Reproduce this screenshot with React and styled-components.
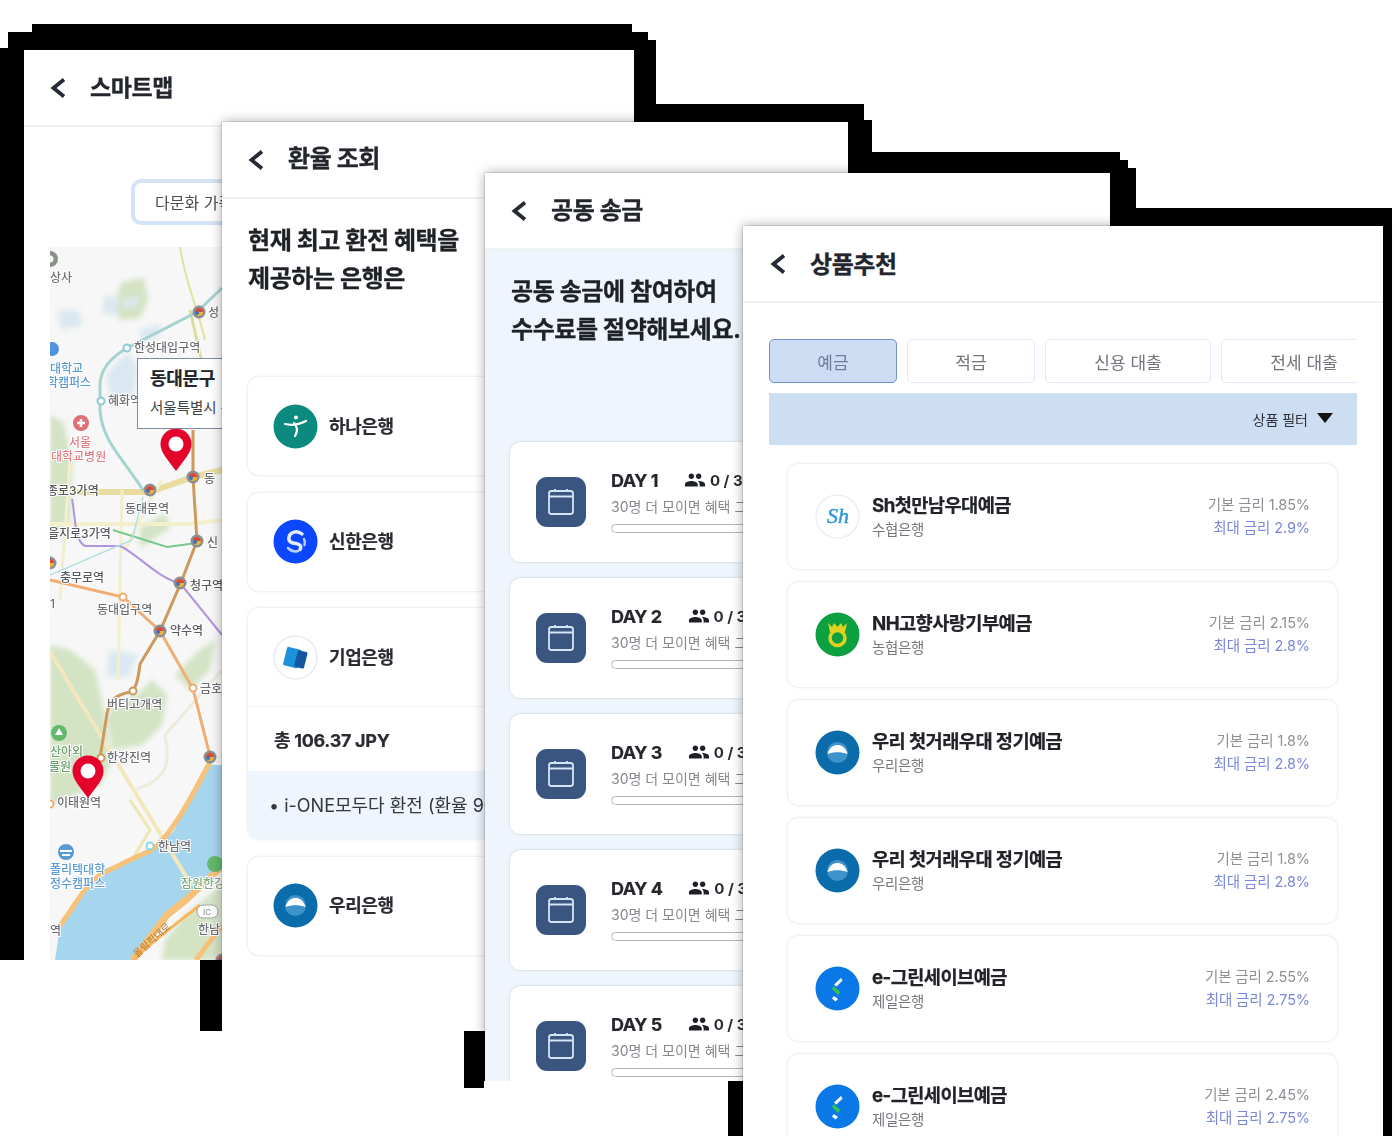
import React from 'react'
import styled, { createGlobalStyle } from 'styled-components'
import { MdPeople } from 'react-icons/md'

const GlobalStyle = createGlobalStyle`
  html, body {
    margin: 0;
    padding: 0;
    background: #ffffff;
  }
  * {
    box-sizing: border-box;
  }
`;

const Canvas = styled.div`
  position: relative;
  width: 1397px;
  height: 1138px;
  overflow: hidden;
  background: #ffffff;
  font-family: Inter, "Noto Sans CJK KR", sans-serif;
  color: #1d1f24;
`;

// the stepped black matte that shows round the overlapping screens
const Matte = styled.div`
  position: absolute;
  inset: 0;
  background: #000000;
  clip-path: polygon(
    0 48px, 8px 48px, 8px 32px, 32px 32px, 32px 24px, 632px 24px, 632px 32px, 648px 32px,
    648px 40px, 656px 40px, 656px 104px, 864px 104px, 864px 120px, 872px 120px, 872px 152px,
    1120px 152px, 1120px 160px, 1128px 160px, 1128px 168px, 1136px 168px, 1136px 208px,
    1392px 208px, 1392px 1136px, 728px 1136px, 728px 1081px, 484px 1081px, 484px 1088px,
    464px 1088px, 464px 1031px, 200px 1031px, 200px 960px, 0 960px
  );
`;

const Screen = styled.section`
  position: absolute;
  left: ${props => props.$x}px;
  top: ${props => props.$y}px;
  width: ${props => props.$w}px;
  height: ${props => props.$h}px;
  background: ${props => props.$tint ? "#eff5fd" : "#ffffff"};
  box-shadow: 0 0 1px rgba(0, 0, 0, 0.55), 0 0 11px rgba(0, 0, 0, 0.34);
  clip-path: inset(-24px -24px 0 -24px);
  overflow: hidden;
`;

const Soft = styled.div`
  filter: blur(0.6px);
`;

const Header = styled.header`
  height: 77px;
  background: #ffffff;
  border-bottom: 2px solid #f0f1f3;
  display: flex;
  align-items: center;
  gap: 24px;
  padding-left: ${props => props.$pad || 26}px;
`;

const Title = styled.h1`
  margin: ${props => props.$lift || -3}px 0 0;
  font-size: ${props => props.$size || 24}px;
  font-weight: 700;
  letter-spacing: -0.4px;
  -webkit-text-stroke: 0.3px #23262c;
  color: #23262c;
`;

const Heading = styled.h2`
  margin: 0;
  font-size: 24px;
  line-height: 38px;
  font-weight: 700;
  letter-spacing: -0.4px;
  -webkit-text-stroke: 0.3px #1e2126;
  color: #1e2126;
`;

/* smart map */
const MapBody = styled.div`
  padding: 52px 0 0 26px;
`;

const ChipRow = styled.div`
  padding-left: 81px;
  margin-bottom: 22px;
`;

const Chip = styled.div`
  width: 300px;
  height: 46px;
  border: 4px solid #d4e3f6;
  border-radius: 10px;
  padding-left: 20px;
  display: flex;
  align-items: center;
  font-size: 16px;
  color: #4a4d52;
`;

const MapBox = styled.div`
  position: relative;
  width: 560px;
  height: 713px;
  overflow: hidden;
`;

const MapPopup = styled.div`
  position: absolute;
  left: 87px;
  top: 111px;
  width: 190px;
  height: 71px;
  background: #ffffff;
  border: 1px solid #7d8aa3;
  padding: 7px 0 0 12px;
`;

const PopupName = styled.div`
  font-size: 18px;
  line-height: 26px;
  font-weight: 700;
  letter-spacing: -0.3px;
  -webkit-text-stroke: 0.2px #24262b;
  color: #24262b;
`;

const PopupSub = styled.div`
  margin-top: 6px;
  font-size: 14.5px;
  line-height: 20px;
  color: #3d3f44;
`;

/* exchange rate */
const RateBody = styled.div`
  padding: 23px 0 0 26px;
`;

const BankList = styled.div`
  margin-top: 79px;
  display: flex;
  flex-direction: column;
  gap: 17.5px;
`;

const Card = styled.div`
  background: #ffffff;
  border-radius: 10px;
  box-shadow: 0 0 3px rgba(0, 0, 0, 0.16);
  overflow: hidden;
`;

const BankCard = styled(Card)`
  width: 555px;
`;

const BankRow = styled.div`
  height: 98px;
  display: flex;
  align-items: center;
  gap: 11px;
  padding-left: 25px;
`;

const BankName = styled.div`
  margin-top: -3px;
  font-size: 18px;
  font-weight: 700;
  letter-spacing: -0.4px;
  -webkit-text-stroke: 0.2px #2a2c31;
  color: #2a2c31;
`;

const BankTotal = styled.div`
  height: 65px;
  border-top: 1px solid #f0f1f3;
  display: flex;
  align-items: center;
  padding-left: 26px;
  font-size: 18px;
  font-weight: 700;
  letter-spacing: -0.3px;
  -webkit-text-stroke: 0.2px #2a2c31;
  color: #2a2c31;
`;

const BankOffer = styled.div`
  height: 68px;
  background: #eef5fd;
  display: flex;
  align-items: center;
  padding: 0 0 2px 21px;
  font-size: 18px;
  color: #34373c;
  white-space: nowrap;
`;

/* group transfer */
const GroupBody = styled.div`
  padding: 23px 0 0 26px;
`;

const DayList = styled.div`
  margin-top: 93px;
  display: flex;
  flex-direction: column;
  gap: 16px;
`;

const DayCard = styled(Card)`
  width: 560px;
  height: 120px;
  flex: none;
  margin-left: -1px;
  display: flex;
  align-items: flex-start;
  padding: 35px 0 0 26px;
  gap: 25px;
`;

const DayIcon = styled.div`
  width: 50px;
  height: 50px;
  flex: none;
  background: #3a5680;
  border-radius: 11px;
  display: flex;
  align-items: center;
  justify-content: center;
`;

const DayInfo = styled.div`
  flex: 1;
  margin-top: -10px;
`;

const DayTop = styled.div`
  display: flex;
  align-items: center;
  gap: 26px;
  height: 26px;
`;

const DayName = styled.div`
  font-size: 18px;
  font-weight: 700;
  letter-spacing: -0.5px;
  -webkit-text-stroke: 0.2px #24262b;
  color: #24262b;
`;

const DayCount = styled.div`
  display: flex;
  align-items: center;
  gap: 4px;
  font-size: 15px;
  font-weight: 700;
  color: #2a2c31;
`;

const DayNote = styled.div`
  margin-top: 4px;
  font-size: 14px;
  line-height: 20px;
  color: #85888d;
  white-space: nowrap;
`;

const Progress = styled.div`
  margin-top: 7px;
  width: 400px;
  height: 9px;
  border: 1.5px solid #b5b7ba;
  border-radius: 5px;
  background: #ffffff;
`;

/* product recommendation */
const ProductBody = styled.div`
  padding: 36px 26px 0 26px;
`;

const Tabs = styled.div`
  display: flex;
  gap: 10px;
  overflow: hidden;
  height: 44px;
`;

const Tab = styled.div`
  flex: none;
  width: ${props => props.$w}px;
  height: 44px;
  border-radius: 5px;
  border: ${props => props.$active ? "1.5px solid #6f8fce" : "1.5px solid #e0e9f5"};
  background: ${props => props.$active ? "#cbdcf3" : "#ffffff"};
  color: ${props => props.$active ? "#6d7f97" : "#72767c"};
  display: flex;
  align-items: center;
  justify-content: center;
  font-size: 17px;
`;

const FilterBar = styled.div`
  margin-top: 10px;
  height: 52px;
  background: #cddef3;
  display: flex;
  align-items: center;
  justify-content: flex-end;
  gap: 9px;
  padding-right: 24px;
  font-size: 14px;
  color: #2d3036;
`;

const Arrow = styled.span`
  width: 0;
  height: 0;
  border-left: 8px solid transparent;
  border-right: 8px solid transparent;
  border-top: 10px solid #111111;
  margin-bottom: 2px;
`;

const ProductList = styled.div`
  margin: 19px 20px 0 19px;
  display: flex;
  flex-direction: column;
  gap: 13px;
`;

const ProductCard = styled(Card)`
  height: 105px;
  flex: none;
  display: flex;
  align-items: center;
  padding: 0 27px 0 27px;
  gap: 12px;
`;

const ProductText = styled.div`
  flex: 1;
`;

const ProductName = styled.div`
  font-size: 18.7px;
  line-height: 26px;
  font-weight: 700;
  letter-spacing: -0.6px;
  -webkit-text-stroke: 0.25px #212328;
  color: #212328;
`;

const ProductBank = styled.div`
  font-size: 14.5px;
  line-height: 22px;
  letter-spacing: -0.3px;
  color: #75787d;
`;

const Rates = styled.div`
  margin-top: -2px;
  text-align: right;
  font-size: 14.5px;
  line-height: 23px;
  letter-spacing: -0.1px;
`;

const BaseRate = styled.div`
  color: #8d9095;
`;

const MaxRate = styled.div`
  color: #7a88d6;
`;

const MapText = styled.text`
  font-family: Inter, "Noto Sans CJK KR", sans-serif;
  font-size: 12px;
  font-weight: 500;
  paint-order: stroke;
  stroke: #ffffff;
  stroke-width: 2px;
  fill: ${props => props.$fill || "#6c6f74"};
`;

const Washes = styled.g`
  filter: blur(2.5px);
`;

const BANK_LOGOS = {
  hana: (
    <>
      <circle cx="22.5" cy="22.5" r="22" fill="#0c8a7f" />
      <circle cx="23" cy="13.5" r="2" fill="#ffffff" />
      <path d="M12 20c6 1.500 14 .5 21-3" stroke="#ffffff" strokeWidth="2.200" fill="none" strokeLinecap="round" />
      <path d="M21 19c4 4 4 8 1 13" stroke="#ffffff" strokeWidth="2.200" fill="none" strokeLinecap="round" />
    </>
  ),
  shinhan: (
    <>
      <circle cx="22.500" cy="22.500" r="22" fill="#0a47ff" />
      <path d="M29 15c-5-4-12-2-13 3s3 6 7 6.500 6 3 4 6" stroke="#e4ecff" strokeWidth="3.500" fill="none" strokeLinecap="round" />
      <path d="M15 29c3 3 7 4 10 3M31 20c1 2 1 4 .5 6" stroke="#b9ccff" strokeWidth="2.500" fill="none" strokeLinecap="round" />
    </>
  ),
  ibk: (
    <>
      <circle cx="22.500" cy="22.500" r="21.500" fill="#ffffff" stroke="#ebe9f3" strokeWidth="1.500" />
      <rect x="12" y="13" width="15" height="19" rx="1.500" fill="#1c92dc" transform="rotate(14 19 22)" />
      <rect x="23" y="16" width="10" height="17" rx="1.500" fill="#14579f" transform="rotate(14 28 24)" />
    </>
  ),
  woori: (
    <>
      <circle cx="22.500" cy="22.500" r="22" fill="#0a6cab" />
      <circle cx="22.500" cy="22.500" r="10.500" fill="#3f93cb" />
      <path d="M12.500 24c2-7 6-9 10-9s8 2 10 9c-6-2.500-14-2.500-20 0z" fill="#ffffff" />
    </>
  ),
  sh: (
    <>
      <circle cx="22.500" cy="22.500" r="21.500" fill="#ffffff" stroke="#e9eef5" strokeWidth="1.500" />
      <text x="23" y="29" textAnchor="middle" fontFamily="Liberation Serif, serif" fontStyle="italic" fontWeight="400" fontSize="22" fill="#2f9bd9" stroke="#2f9bd9" strokeWidth="0.500">Sh</text>
    </>
  ),
  nh: (
    <>
      <circle cx="22.500" cy="22.500" r="22" fill="#0ca040" />
      <path d="M13 11l4 4 2-4 3.500 4 3.500-4 2 4 4-4-2 9h-15z" fill="#e2d21e" />
      <circle cx="22.500" cy="26" r="7.500" fill="none" stroke="#e2d21e" strokeWidth="3.500" />
    </>
  ),
  sc: (
    <>
      <circle cx="22.500" cy="22.500" r="22" fill="#0b78e8" />
      <path d="M26 12l-7 6.500 2.500 2 6-6z" fill="#ffffff" />
      <path d="M18.500 20l7 6-2.500 3-6-6z" fill="#35c24e" />
      <path d="M19 30l4 3-2.500 2.500-3.500-3z" fill="#ffffff" />
    </>
  ),
};

const BankLogo = ({ kind }) => (
  <svg width="45" height="45" viewBox="0 0 45 45" style={{ flex: 'none' }}>
    {BANK_LOGOS[kind]}
  </svg>
);

const BackIcon = () => (
  <svg width="16" height="22" viewBox="0 0 16 22" style={{ flex: 'none' }}>
    <polyline points="14,2.500 3.500,11 14,19.500" fill="none" stroke="#252a35" strokeWidth="3.800" />
  </svg>
);

const CalendarIcon = () => (
  <svg width="28" height="28" viewBox="0 0 28 28">
    <rect x="2" y="3" width="24" height="23" rx="2.500" fill="none" stroke="#d6e4f6" strokeWidth="1.800" />
    <path d="M2 8.500h24M8 1v3M20 1v3" stroke="#d6e4f6" strokeWidth="1.800" fill="none" />
  </svg>
);

const Pin = ({ x, y }) => (
  <g transform={`translate(${x} ${y})`}>
    <path d="M0 21C-9 9-15.500 2-15.500-6a15.500 15.500 0 0 1 31 0C15.500 2 9 9 0 21z" fill="#e3032b" />
    <circle cx="0" cy="-6" r="7.500" fill="#ffffff" />
  </g>
);

const GREEN_AREAS = [
  "M50 415l14 8 8 40 -2 60 -20 10z",
  "M50 645l20 5 25 20 10 45 5 50-10 20-50 20z",
  "M112 705l25-10 15-15 15 15-5 30-20 20-30 5-5-30z",
  "M122 282l22-4 4 22-8 18-20 2-6-18z",
  "M175 675l25-25 15-10-5 30-20 20z",
  "M140 528l25-15 5 15-30 20z",
  "M195 810l27-20v40l-20 20z",
  "M165 940l20-25 37-30v75h-60z",
];

const WATER_AREAS = [
  "M105 295l15 3-4 18-14-4z",
  "M58 310h20l5 15-22 5z",
  "M128 352l-22 22 6 30 22-10 4-25z",
  "M110 650l28 5-10 22-22 0z",
  "M140 330l20-6 0 12-18 6z",
  "M122 300l18-4 -4 10-12 2z",
];

const ROADS = [
  { d: "M50 652L187 878", color: "#f3e8bd", width: 4 },
  { d: "M50 492H150L193 477L222 470", color: "#e8dd9e", width: 6 },
  { d: "M50 524H190L222 520", color: "#f3eecc", width: 4 },
  { d: "M70 460L60 600M122 490L118 680", color: "#f3eecc", width: 3 },
  { d: "M190 310L215 420", color: "#dcdf9b", width: 3 },
  { d: "M180 247C185 280 195 300 205 340", color: "#dde3a0", width: 2 },
  { d: "M125 550L150 500L162 480", color: "#f3eecc", width: 3 },
  { d: "M133 790C170 780 170 760 165 735L222 670", color: "#eeeadc", width: 3 },
  { d: "M133 858L150 830L130 800", color: "#efe6b4", width: 3 },
  { d: "M60 926C75 905 85 885 100 875C125 862 140 855 150 851C170 838 190 800 210 762", color: "#f6c27a", width: 5 },
  { d: "M133 960L167 915L187 899L222 866", color: "#f6c27a", width: 7 },
  { d: "M196 960L222 925", color: "#f6c27a", width: 5 },
  { d: "M133 960C160 935 175 925 200 905", color: "#f9b45d", width: 3 },
];

const LINES = [
  { d: "M222 288L197 312L127 348C110 358 100 370 100 385V410C102 440 120 455 143 490", color: "#a5d3d0", width: 3 },
  { d: "M193 430L193 477L197 541L180 585L160 631L140 664C138 680 136 690 130 692C115 695 108 700 106 720L100 758", color: "#cc9a5d", width: 3 },
  { d: "M50 580L123 597L160 631L193 689L210 756", color: "#f0ad74", width: 3 },
  { d: "M72 499C76 520 74 540 85 546H120C135 552 160 580 180 583L222 635", color: "#b394dd", width: 2 },
  { d: "M113 530L167 547L197 543", color: "#79c98e", width: 2 },
  { d: "M143 497L132 540L50 575", color: "#b5e0e3", width: 1.500 },
];

const TRANSFERS = [
  [199, 312], [150, 490], [193, 477], [197, 541], [180, 583], [160, 631], [50, 563], [210, 757], [222, 960],
];

const STOPS = [
  [127, 348, "#8fcbd6"], [101, 401, "#8fcbd6"], [123, 597, "#f0ad74"], [133, 691, "#cc9a5d"],
  [193, 688, "#f0ad74"], [101, 758, "#cc9a5d"], [150, 846, "#8fd8e0"], [50, 804, "#f0ad74"],
];

const LABELS = [
  { x: 50, y: 282, t: "상사" },
  { x: 208, y: 317, t: "성" },
  { x: 134, y: 352, t: "한성대입구역" },
  { x: 50, y: 373, t: "대학교", fill: "#5b9bd5" },
  { x: 47, y: 387, t: "학캠퍼스", fill: "#5b9bd5" },
  { x: 108, y: 405, t: "혜화역" },
  { x: 69, y: 447, t: "서울", fill: "#df7f86" },
  { x: 51, y: 461, t: "대학교병원", fill: "#df7f86" },
  { x: 204, y: 483, t: "동" },
  { x: 47, y: 495, t: "종로3가역", fill: "#55585c" },
  { x: 125, y: 513, t: "동대문역" },
  { x: 48, y: 538, t: "을지로3가역", fill: "#55585c" },
  { x: 207, y: 547, t: "신" },
  { x: 60, y: 582, t: "충무로역", fill: "#55585c" },
  { x: 190, y: 590, t: "청구역", fill: "#55585c" },
  { x: 50, y: 608, t: "1" },
  { x: 97, y: 614, t: "동대입구역" },
  { x: 170, y: 635, t: "약수역", fill: "#55585c" },
  { x: 200, y: 693, t: "금호" },
  { x: 107, y: 709, t: "버티고개역" },
  { x: 50, y: 756, t: "산아외", fill: "#6fa06f" },
  { x: 49, y: 771, t: "물원", fill: "#6fa06f" },
  { x: 107, y: 762, t: "한강진역" },
  { x: 57, y: 807, t: "이태원역" },
  { x: 158, y: 851, t: "한남역" },
  { x: 50, y: 874, t: "폴리텍대학", fill: "#5b9bd5" },
  { x: 50, y: 888, t: "정수캠퍼스", fill: "#5b9bd5" },
  { x: 181, y: 888, t: "잠원한강", fill: "#7fae7f" },
  { x: 198, y: 934, t: "한남" },
  { x: 50, y: 935, t: "역" },
];

const CityMap = () => (
  <svg width="560" height="713" viewBox="50 247 560 713" style={{ display: 'block' }}>
    <rect x="50" y="247" width="560" height="713" fill="#f6f7f6" />
    <Washes>
      {GREEN_AREAS.map((d, i) => <path key={i} d={d} fill="#d3e3c4" />)}
      {WATER_AREAS.map((d, i) => <path key={i} d={d} fill="#dbe8f1" />)}
    </Washes>
    <path d="M210 765L173 832L150 851L100 871L60 926L55 960H133L167 913L187 897L222 863V765z" fill="#a6d5ee" />
    {ROADS.map((r, i) => <path key={i} d={r.d} stroke={r.color} strokeWidth={r.width} fill="none" />)}
    {LINES.map((r, i) => <path key={i} d={r.d} stroke={r.color} strokeWidth={r.width} fill="none" />)}
    {TRANSFERS.map(([x, y], i) => (
      <g key={i}>
        <circle cx={x} cy={y} r="6.500" fill="#8a8f96" />
        <circle cx={x} cy={y} r="4" fill="#f0b32f" />
        <path d={`M${x - 4} ${y}a4 4 0 0 1 8 0z`} fill="#d8493a" />
        <circle cx={x - 2} cy={y + 1} r="2" fill="#3b6fc4" />
      </g>
    ))}
    {STOPS.map(([x, y, c], i) => <circle key={i} cx={x} cy={y} r="3.500" fill="#ffffff" stroke={c} strokeWidth="2" />)}
    <circle cx="50" cy="259" r="8" fill="#8a9188" />
    <circle cx="50" cy="259" r="3.500" fill="#f6f7f6" />
    <circle cx="52" cy="349" r="7" fill="#4f94dd" />
    <circle cx="81" cy="423" r="8" fill="#e07078" />
    <path d="M77 423h8M81 419v8" stroke="#ffffff" strokeWidth="2.500" />
    <circle cx="59" cy="733" r="8" fill="#62b86b" />
    <path d="M59 728l4 7h-8z" fill="#ffffff" />
    <circle cx="66" cy="852" r="8" fill="#5b9bd5" />
    <path d="M60 851h12M62 855h8" stroke="#ffffff" strokeWidth="1.800" />
    <circle cx="215" cy="864" r="8" fill="#62b86b" />
    <rect x="197" y="905" width="21" height="13" rx="6" fill="#ffffff" stroke="#9ea39f" />
    <text x="207" y="915" textAnchor="middle" fontSize="8" fill="#777b7f" fontFamily="Inter, sans-serif">IC</text>
    {LABELS.map((l, i) => <MapText key={i} x={l.x} y={l.y} $fill={l.fill}>{l.t}</MapText>)}
    <text x="0" y="0" transform="translate(137 958) rotate(-42)" fontSize="10" fill="#b07a2c" fontFamily="Noto Sans CJK KR, sans-serif">올림픽대로</text>
    <Pin x={176} y={450} />
    <Pin x={88} y={777} />
  </svg>
);

const SmartMap = () => (
  <Screen $x={24} $y={50} $w={610} $h={910}>
    <Soft>
      <Header>
        <BackIcon />
        <Title $size={23}>스마트맵</Title>
      </Header>
      <MapBody>
        <ChipRow>
          <Chip>다문화 가족</Chip>
        </ChipRow>
        <MapBox>
          <CityMap />
          <MapPopup>
            <PopupName>동대문구</PopupName>
            <PopupSub>서울특별시 동대문구</PopupSub>
          </MapPopup>
        </MapBox>
      </MapBody>
    </Soft>
  </Screen>
);

const ExchangeRate = () => (
  <Screen $x={222} $y={122} $w={626} $h={909}>
    <Soft>
      <Header>
        <BackIcon />
        <Title $lift={-7}>환율 조회</Title>
      </Header>
      <RateBody>
        <Heading>현재 최고 환전 혜택을<br />제공하는 은행은</Heading>
        <BankList>
          <BankCard>
            <BankRow><BankLogo kind="hana" /><BankName>하나은행</BankName></BankRow>
          </BankCard>
          <BankCard>
            <BankRow><BankLogo kind="shinhan" /><BankName>신한은행</BankName></BankRow>
          </BankCard>
          <BankCard>
            <BankRow><BankLogo kind="ibk" /><BankName>기업은행</BankName></BankRow>
            <BankTotal>총 106.37 JPY</BankTotal>
            <BankOffer>• i-ONE모두다 환전 (환율 90% 우대)</BankOffer>
          </BankCard>
          <BankCard>
            <BankRow><BankLogo kind="woori" /><BankName>우리은행</BankName></BankRow>
          </BankCard>
        </BankList>
      </RateBody>
    </Soft>
  </Screen>
);

const DAYS = ["DAY 1", "DAY 2", "DAY 3", "DAY 4", "DAY 5"];

const GroupTransfer = () => (
  <Screen $x={485} $y={173} $w={625} $h={908} $tint>
    <Soft>
      <Header>
        <BackIcon />
        <Title $lift={-5}>공동 송금</Title>
      </Header>
      <GroupBody>
        <Heading>공동 송금에 참여하여<br />수수료를 절약해보세요.</Heading>
        <DayList>
          {DAYS.map(day => (
            <DayCard key={day}>
              <DayIcon><CalendarIcon /></DayIcon>
              <DayInfo>
                <DayTop>
                  <DayName>{day}</DayName>
                  <DayCount><MdPeople size={22} color="#1d2026" />0 / 30</DayCount>
                </DayTop>
                <DayNote>30명 더 모이면 혜택 그룹 달성</DayNote>
                <Progress />
              </DayInfo>
            </DayCard>
          ))}
        </DayList>
      </GroupBody>
    </Soft>
  </Screen>
);

const TABS = [
  { label: "예금", w: 128, active: true },
  { label: "적금", w: 128 },
  { label: "신용 대출", w: 166 },
  { label: "전세 대출", w: 166 },
];

const PRODUCTS = [
  { logo: "sh", name: "Sh첫만남우대예금", bank: "수협은행", base: "1.85", max: "2.9" },
  { logo: "nh", name: "NH고향사랑기부예금", bank: "농협은행", base: "2.15", max: "2.8" },
  { logo: "woori", name: "우리 첫거래우대 정기예금", bank: "우리은행", base: "1.8", max: "2.8" },
  { logo: "woori", name: "우리 첫거래우대 정기예금", bank: "우리은행", base: "1.8", max: "2.8" },
  { logo: "sc", name: "e-그린세이브예금", bank: "제일은행", base: "2.55", max: "2.75" },
  { logo: "sc", name: "e-그린세이브예금", bank: "제일은행", base: "2.45", max: "2.75" },
];

const Products = () => (
  <Screen $x={743} $y={226} $w={640} $h={910}>
    <Soft>
      <Header $pad={27}>
        <BackIcon />
        <Title>상품추천</Title>
      </Header>
      <ProductBody>
        <Tabs>
          {TABS.map(tab => (
            <Tab key={tab.label} $w={tab.w} $active={tab.active}>{tab.label}</Tab>
          ))}
        </Tabs>
        <FilterBar>상품 필터<Arrow /></FilterBar>
        <ProductList>
          {PRODUCTS.map((p, i) => (
            <ProductCard key={i}>
              <BankLogo kind={p.logo} />
              <ProductText>
                <ProductName>{p.name}</ProductName>
                <ProductBank>{p.bank}</ProductBank>
              </ProductText>
              <Rates>
                <BaseRate>기본 금리 {p.base}%</BaseRate>
                <MaxRate>최대 금리 {p.max}%</MaxRate>
              </Rates>
            </ProductCard>
          ))}
        </ProductList>
      </ProductBody>
    </Soft>
  </Screen>
);

export default function App() {
  return (
    <Canvas>
      <GlobalStyle />
      <Matte />
      <SmartMap />
      <ExchangeRate />
      <GroupTransfer />
      <Products />
    </Canvas>
  )
}
